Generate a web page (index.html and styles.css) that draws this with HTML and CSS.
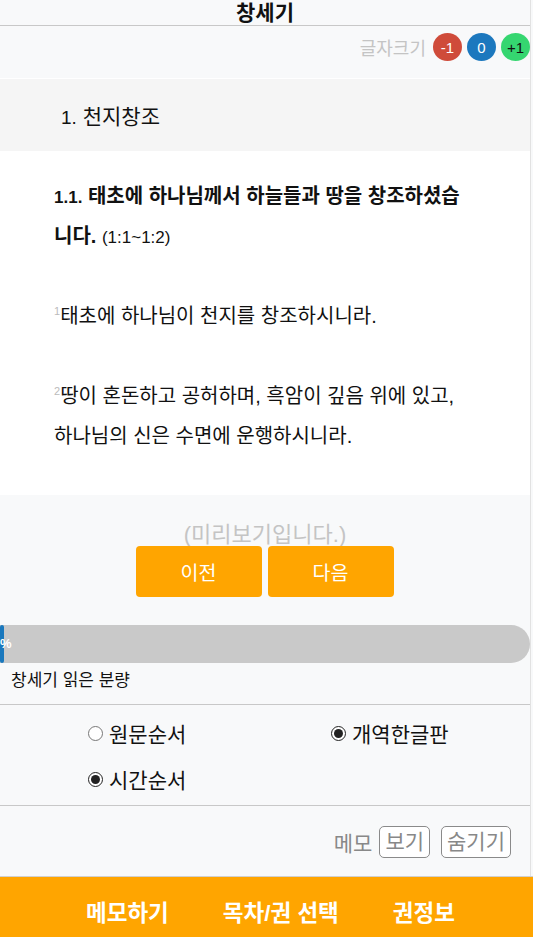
FILE: index.html
```html
<!DOCTYPE html>
<html lang="ko">
<head>
    <meta charset="UTF-8">
    <title>창세기</title>
    <link rel="stylesheet" href="styles.css">
</head>
<body>
    <div class="page">
        <header class="top">창세기</header>

        <div class="fontsize">
            <span class="fs-label">글자크기</span>
            <button class="fs-btn minus">-1</button>
            <button class="fs-btn zero">0</button>
            <button class="fs-btn plus">+1</button>
        </div>

        <div class="chapter"><span class="num">1.</span> 천지창조</div>

        <div class="content">
            <p class="title"><span class="num">1.1.</span> 태초에 하나님께서 하늘들과 땅을 창조하셨습니다. <span class="num ref">(1:1~1:2)</span></p>
            <p class="verse"><sup>1</sup>태초에 하나님이 천지를 창조하시니라.</p>
            <p class="verse"><sup>2</sup>땅이 혼돈하고 공허하며, 흑암이 깊음 위에 있고, 하나님의 신은 수면에 운행하시니라.</p>
        </div>

        <div class="nav">
            <div class="preview">(미리보기입니다.)</div>
            <div class="nav-btns">
                <button class="nav-btn">이전</button>
                <button class="nav-btn">다음</button>
            </div>
        </div>

        <div class="progress">
            <div class="progress-fill">%</div>
        </div>
        <div class="progress-label">창세기 읽은 분량</div>

        <div class="options">
            <label class="opt"><input type="radio" name="order"> 원문순서</label>
            <label class="opt"><input type="radio" name="ver" checked> 개역한글판</label>
            <label class="opt"><input type="radio" name="order" checked> 시간순서</label>
        </div>

        <div class="memo">
            <span>메모</span>
            <button class="memo-btn">보기</button>
            <button class="memo-btn">숨기기</button>
        </div>
    </div>

    <footer class="bottom">
        <a>메모하기</a>
        <a>목차/권 선택</a>
        <a>권정보</a>
    </footer>
</body>
</html>
```

FILE: styles.css
```css
body { margin: 0; background: #f8f9fa; font-family: "Liberation Sans", "Noto Sans CJK KR", sans-serif; color: #111; }
.page { width: 530px; background: #f8f9fa; border-right: 1px solid #e2e2e2; }
.num { font-size: 17px; line-height: 1; }

.top { height: 25px; line-height: 25px; text-align: center; font-size: 21px; font-weight: bold; border-bottom: 1px solid #c8c8c8; }

.fontsize { display: flex; justify-content: flex-end; align-items: center; gap: 5px; padding: 7px 0 17px; border-bottom: 1px solid #fff; }
.fs-label { color: #c4c4c4; font-size: 18px; margin-right: 2px; }
.fs-btn { width: 29px; height: 28px; border-radius: 50%; border: none; padding: 0; font-size: 15px; font-family: inherit; color: #fff; }
.fs-btn.minus { background: #cf4b3a; }
.fs-btn.zero { background: #1c78be; }
.fs-btn.plus { background: #35d670; color: #111; }

.chapter { background: #f5f5f5; height: 72px; line-height: 76px; padding-left: 61px; font-size: 21px; }
.chapter .num { font-size: 19px; line-height: normal; }

.content { background: #fff; padding: 25px 60px 39px 54px; font-size: 20px; line-height: 40px; }
.content p { margin: 0; }
.content .title { font-weight: bold; margin-bottom: 40px; }
.content .title .ref { font-weight: normal; }
.content .verse { margin-bottom: 40px; }
.content .verse:last-child { margin-bottom: 0; }
.content sup { color: #bbb; font-size: 11px; line-height: 0; vertical-align: baseline; position: relative; top: -8px; }

.nav { padding: 26px 0 28px; text-align: center; }
.preview { color: #c4c4c4; font-size: 22px; line-height: 28px; }
.nav-btns { display: flex; justify-content: center; gap: 6px; margin-top: -3px; padding-right: 1px; }
.nav-btn { width: 126px; height: 51px; background: #ffa500; color: #fff; border: none; border-radius: 4px; font-size: 19.5px; font-family: inherit; }

.progress { height: 38px; background: #c9c9c9; border-radius: 0 19px 19px 0; overflow: hidden; }
.progress-fill { width: 4px; height: 100%; background: #1a78bd; border-radius: 4px; color: #fff; font-weight: bold; font-size: 13px; line-height: 38px; white-space: nowrap; }
.progress-label { font-size: 17px; padding: 3px 11px 13px; border-bottom: 1px solid #c8c8c8; }

.options { display: grid; grid-template-columns: 243px 1fr; padding: 10px 0 8px 88px; border-bottom: 1px solid #c8c8c8; row-gap: 10px; }
.opt { font-size: 21px; display: flex; align-items: center; gap: 6px; height: 36px; }
.opt input { margin: 0; width: 15px; height: 15px; accent-color: #222; }

.memo { display: flex; justify-content: flex-end; align-items: center; gap: 7px; padding: 20px 19px 18px 0; color: #888; font-size: 21px; }
.memo-btn { border: 1px solid #8a8a8a; border-radius: 5px; background: #fff; color: #888; font-size: 21px; font-family: inherit; padding: 0 5px; height: 32px; line-height: 28px; }
.memo-btn + .memo-btn { margin-left: 4px; }

.bottom { background: #ffa500; height: 68px; border-top: 1px solid #d0d0d0; display: flex; align-items: center; padding-left: 86px; gap: 54px; }
.bottom a { color: #fff; font-weight: bold; font-size: 22.5px; }
```
